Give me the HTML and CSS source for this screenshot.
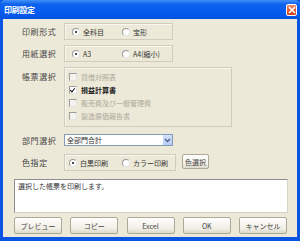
FILE: index.html
```html
<!DOCTYPE html>
<html lang="ja">
<head>
    <meta charset="UTF-8">
    <link rel="stylesheet" href="styles.css">
</head>
<body>
    <div class="window">
        <div class="titlebar">
            <span class="title">印刷設定</span>
            <div class="close">
                <svg width="8" height="8" viewBox="0 0 8 8"><path d="M1 1L7 7M7 1L1 7" stroke="#fff" stroke-width="1.6"/></svg>
            </div>
        </div>

        <div class="client">
            <div class="row r1">
                <div class="label">印刷形式</div>
                <div class="group radios">
                    <span class="radio on"><i></i>全科目</span>
                    <span class="radio"><i></i>宝形</span>
                </div>
            </div>

            <div class="row r2">
                <div class="label">用紙選択</div>
                <div class="group radios">
                    <span class="radio on"><i></i>A3</span>
                    <span class="radio"><i></i>A4(縮小)</span>
                </div>
            </div>

            <div class="row r3">
                <div class="label">帳票選択</div>
                <div class="group checks">
                    <span class="check off"><i></i>貸借対照表</span>
                    <span class="check on"><i></i>損益計算書</span>
                    <span class="check off"><i></i>販売費及び一般管理費</span>
                    <span class="check off"><i></i>製造原価報告書</span>
                </div>
            </div>

            <div class="row r4">
                <div class="label">部門選択</div>
                <div class="combo">
                    <span>全部門合計</span>
                    <div class="arrow">
                        <svg width="7" height="5" viewBox="0 0 7 5"><path d="M1 1L3.5 3.5L6 1" stroke="#4d6185" stroke-width="1.3" fill="none"/></svg>
                    </div>
                </div>
            </div>

            <div class="row r5">
                <div class="label">色指定</div>
                <div class="group radios color">
                    <span class="radio on"><i></i>白黒印刷</span>
                    <span class="radio"><i></i>カラー印刷</span>
                </div>
                <div class="btn small">色選択</div>
            </div>

            <div class="message">選択した帳票を印刷します。</div>

            <div class="buttons">
                <div class="btn">プレビュー</div>
                <div class="btn">コピー</div>
                <div class="btn">Excel</div>
                <div class="btn">OK</div>
                <div class="btn">キャンセル</div>
            </div>
        </div>
    </div>
</body>
</html>
```

FILE: styles.css
```css
body {
    margin: 0;
    font-family: "Noto Sans CJK JP", "DejaVu Sans", sans-serif;
    background: #ece9d8;
}

.window {
    width: 300px;
    height: 241px;
    display: flex;
    flex-direction: column;
    background: #0a55e4;
}

.titlebar {
    height: 19px;
    display: flex;
    align-items: center;
    justify-content: space-between;
    padding: 0 3px 0 4px;
    background: linear-gradient(#4391f8, #0e63ee 22%, #045cf0 60%, #0453e2);
    border-radius: 5px 5px 0 0;
}

.title {
    color: #fff;
    font-size: 8px;
    font-weight: bold;
    letter-spacing: -0.3px;
}

.close {
    width: 11px;
    height: 12px;
    border: 1px solid #fff;
    border-radius: 2px;
    background: linear-gradient(#ec8f70, #e0522a 60%, #cc421c);
    display: flex;
    align-items: center;
    justify-content: center;
    box-sizing: border-box;
}

.client {
    flex: 1;
    margin: 0 3px 4px 3px;
    background: #ece9d8;
    display: flex;
    flex-direction: column;
    font-size: 7px;
    color: #333;
}

.row {
    display: flex;
    align-items: center;
}

.label {
    width: 42px;
    margin-left: 19px;
    font-size: 8px;
    letter-spacing: 0.6px;
    color: #444;
}

.group {
    border: 1px solid #d0cdbd;
    box-shadow: inset 1px 1px 0 #f8f7f0;
    box-sizing: border-box;
}

.radios {
    width: 109px;
    height: 17px;
    display: flex;
    align-items: center;
    padding-left: 7px;
}

.r1 { margin-top: 4px; }
.r2 { margin-top: 5px; }

.radio {
    display: flex;
    align-items: center;
    width: 58px;
    white-space: nowrap;
}

.radio i {
    width: 6px;
    height: 6px;
    border-radius: 50%;
    border: 1px solid #9a9a9a;
    border-right-color: #e6e6e6;
    border-bottom-color: #e6e6e6;
    background: #fff;
    margin-right: 3px;
    position: relative;
}

.radio.on i::after {
    content: "";
    position: absolute;
    left: 2px;
    top: 2px;
    width: 2px;
    height: 2px;
    border-radius: 50%;
    background: #111;
}

.r3 {
    margin-top: 5px;
    align-items: flex-start;
}

.r3 .label {
    margin-top: 4px;
}

.checks {
    width: 168px;
    height: 60px;
    display: flex;
    flex-direction: column;
    padding: 4px 0 0 4px;
    gap: 3px;
}

.check {
    display: flex;
    align-items: center;
    height: 10px;
    white-space: nowrap;
}

.check i {
    width: 6px;
    height: 6px;
    border: 1px solid #9c9c9c;
    border-right-color: #e2e2e2;
    border-bottom-color: #e2e2e2;
    background: #f4f3ee;
    margin-right: 4px;
    position: relative;
}

.check.off {
    color: #aca899;
}

.check.on {
    font-weight: bold;
    color: #222;
}

.check.on i {
    background: #fff;
}

.check.on i::after {
    content: "";
    position: absolute;
    left: 1px;
    top: 0;
    width: 2px;
    height: 4px;
    border-right: 1px solid #111;
    border-bottom: 1px solid #111;
    transform: rotate(40deg);
}

.r4 { margin-top: 7px; }

.combo {
    width: 109px;
    height: 12px;
    box-sizing: border-box;
    border: 1px solid #7f9db9;
    background: #fff;
    display: flex;
    align-items: center;
    justify-content: space-between;
    padding-left: 2px;
}

.arrow {
    width: 9px;
    height: 10px;
    background: linear-gradient(#d3e0fb, #b7cbf8);
    display: flex;
    align-items: center;
    justify-content: center;
}

.r5 { margin-top: 8px; }

.color {
    width: 112px;
    padding-left: 4px;
}

.btn {
    height: 17px;
    width: 48px;
    box-sizing: border-box;
    border: 1px solid #aca999;
    border-radius: 2px;
    background: linear-gradient(#fefefd, #f1efe6 70%, #dcd8cb);
    display: flex;
    align-items: center;
    justify-content: center;
    font-size: 7px;
    color: #444;
}

.btn.small {
    width: 27px;
    height: 15px;
    margin-left: 6px;
    margin-top: -2px;
}

.message {
    margin: 8px 9px 0 11px;
    height: 34px;
    box-sizing: border-box;
    background: #fff;
    border: 1px solid #8e8e8e;
    border-right-color: #d8d5c8;
    border-bottom-color: #d8d5c8;
    padding: 1px 3px;
    font-size: 7px;
}

.buttons {
    margin: 4px 10px 0 11px;
    display: flex;
    justify-content: space-between;
}
```
